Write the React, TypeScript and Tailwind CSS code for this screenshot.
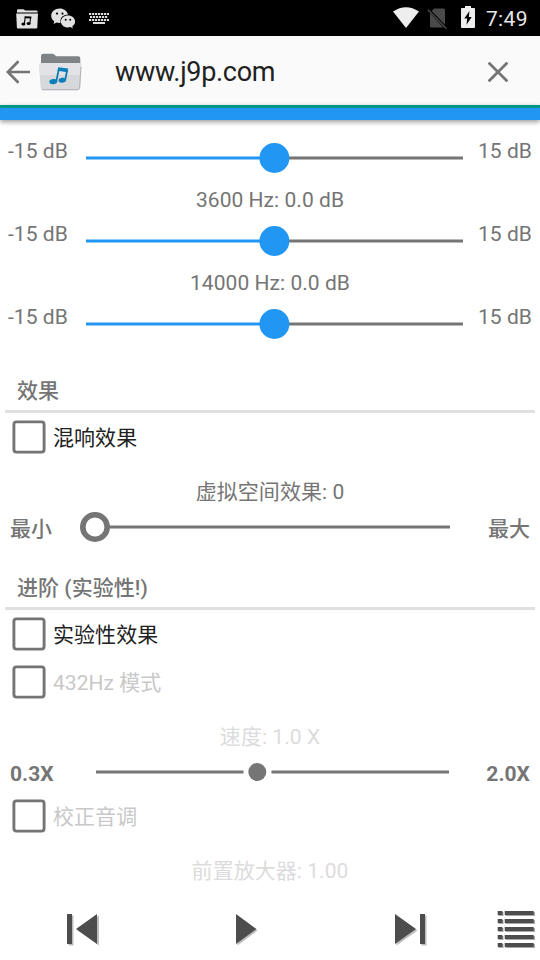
import React, { useState } from "react";

const FONT = "font-[Roboto,'Noto_Sans_CJK_SC',sans-serif]";

function StatusBar() {
  return (
    <div className="flex h-9 shrink-0 items-center justify-between bg-black pl-4 pr-3">
      <div className="flex items-center">
        {/* Music folder */}
        <svg className="mt-px" width="23" height="20" viewBox="0 0 23 20">
          <path d="M1 3.6V1.4Q1 .2 2.2.2H7.4L9.4 1.6H20.4Q21.6 1.6 21.6 2.8V3.6Z" fill="#e2e2e2" />
          <path d="M.2 4.6H22L21.3 18.2Q21.2 19.4 20 19.4H2.2Q1 19.4.9 18.2Z" fill="#e2e2e2" />
          <path d="M8.4 7.2L15.4 7.6L15.2 9.6L9.2 9.2Z" fill="#000" />
          <path d="M9.2 8L8.4 14.6M14.7 8.5L13.8 14.2" stroke="#000" strokeWidth="1.1" />
          <ellipse cx="7.4" cy="15" rx="2" ry="1.5" fill="#000" />
          <ellipse cx="12.6" cy="14.6" rx="2" ry="1.5" fill="#000" />
        </svg>
        {/* Chat bubbles */}
        <svg className="ml-3" width="25" height="21" viewBox="0 0 25 21">
          <path d="M8.8.6C4 .6.2 3.7.2 7.8c0 2.4 1.2 4.2 3.1 5.5L2.5 16l3.1-1.6c1 .3 2.1.5 3.2.5l.8-.1C8.6 9.9 12 6.8 17 6.6 16.1 3 12.7.6 8.8.6Z" fill="#e2e2e2" />
          <path d="M17 7.5c-4 0-7.1 2.7-7.1 6s3.1 6 7.1 6c.9 0 1.7-.1 2.5-.4l2.4 1.4-.6-2.3c1.7-1.1 2.8-2.8 2.8-4.7 0-3.3-3.1-6-7.1-6Z" fill="#e2e2e2" />
          <circle cx="6" cy="5.6" r="1.1" fill="#000" />
          <circle cx="11.5" cy="5.6" r="1.1" fill="#000" />
          <circle cx="14.7" cy="11.7" r="1" fill="#000" />
          <circle cx="19.2" cy="11.7" r="1" fill="#000" />
        </svg>
        {/* Keyboard */}
        <svg className="ml-[13px] mt-px" width="20" height="12" viewBox="0 0 20 12">
          <g stroke="#dcdcdc" strokeWidth="2" fill="none">
            <path d="M0 1H20" strokeDasharray="2.2 .8" />
            <path d="M1 4H19" strokeDasharray="2.2 .8" />
            <path d="M0 7H20" strokeDasharray="2.2 .8" />
            <path d="M4 10H16" />
          </g>
        </svg>
      </div>
      <div className="flex items-center">
        <svg className="-mt-0.5" width="26" height="21" viewBox="0 0 26 21">
          <path d="M0 4.6Q13-4.3 26 4.6L13 21Z" fill="#eee" />
        </svg>
        <svg className="ml-2" width="20" height="21" viewBox="0 0 20 21">
          <path d="M7 .5H16.5Q18 .5 18 2V16.8L4.7 2.9Z" fill="#4a4a4a" />
          <path d="M3 5.2L16.3 19.5H4.5Q3 19.5 3 18Z" fill="#4a4a4a" />
          <path d="M.9 1.7L19.3 20.6" stroke="#4a4a4a" strokeWidth="1.5" />
        </svg>
        <svg className="-mt-0.5 ml-3.5" width="14" height="22" viewBox="0 0 14 22">
          <path d="M4 0H10V2H13Q14 2 14 3V21Q14 22 13 22H1Q0 22 0 21V3Q0 2 1 2H4Z" fill="#eee" />
          <path d="M8.5 5L3.3 12.5H6.2L5.5 18.8L10.7 11H7.8Z" fill="#000" />
        </svg>
        <span className="ml-[11px] mt-0.5 text-[21px] leading-9 tracking-[0.4px] text-[#e6e6e6]">7:49</span>
      </div>
    </div>
  );
}

function Toolbar() {
  return (
    <header className="flex h-[69px] shrink-0 items-center bg-[#fafafa] pl-1.5">
      <button type="button" aria-label="Back" className="mt-0.5">
        <svg width="25" height="24" viewBox="0 0 25 24">
          <path d="M24 12H2M12.5 1.2L1.8 12L12.5 22.8" fill="none" stroke="#757575" strokeWidth="2.7" />
        </svg>
      </button>
      <svg className="ml-2 mt-0.5" width="43" height="38" viewBox="0 0 43 38">
        <path d="M2 12V3Q2 .8 4.2.8H14L17.5 3.2H39Q41.3 3.2 41.3 5.6V12Z" fill="#7e8386" />
        <path d="M.2 12.2Q.2 10 2.5 10H40.2Q42.6 10 42.5 12.4L41.2 34.5Q41 37.2 38.5 37.2H4.2Q1.8 37.2 1.6 34.5Z" fill="#d7d8dc" />
        <path d="M.2 12.2Q.2 10 2.5 10H40.2Q42.6 10 42.5 12.4L41.9 22H.8Z" fill="#e2e2e7" />
        <path d="M3 36.7H38.5Q40.5 36.3 40.7 34L41.9 14" fill="none" stroke="#b1b2b5" strokeWidth="1" />
        <path d="M19.2 14.2L29.2 15.6L28.4 19.3L18.7 17.8Z" fill="#0b80b8" />
        <path d="M20 15.2L17.3 28.2M28.3 16.5L26.2 27" stroke="#0b80b8" strokeWidth="1.8" />
        <ellipse cx="14.3" cy="28.6" rx="4" ry="2.6" transform="rotate(-8 14.3 28.6)" fill="#0b80b8" />
        <ellipse cx="23.3" cy="27.2" rx="3.8" ry="2.5" transform="rotate(-8 23.3 27.2)" fill="#0b80b8" />
      </svg>
      <h1 className="ml-[33px] mt-0.5 grow text-[27px] leading-9 tracking-[-0.3px] text-[#212121]">www.j9p.com</h1>
      <button type="button" aria-label="Close" className="mr-8 mt-0.5">
        <svg width="20" height="20" viewBox="0 0 20 20">
          <path d="M.6.6L19.4 19.4M19.4.6L.6 19.4" stroke="#757575" strokeWidth="2.8" />
        </svg>
      </button>
    </header>
  );
}

function EqSlider() {
  return (
    <div className="flex h-[50px] shrink-0 px-2">
      <span className="w-[78px] leading-9">-15 dB</span>
      <svg className="shrink-0" width="377" height="50" viewBox="0 0 377 50">
        <path d="M188 25H377" stroke="#757575" strokeWidth="3.2" />
        <path d="M0 25H188" stroke="#2196f3" strokeWidth="3.2" />
        <circle cx="188.4" cy="25" r="15" fill="#2196f3" />
      </svg>
      <span className="grow text-right leading-9">15 dB</span>
    </div>
  );
}

function SectionTitle({ children }: { children: React.ReactNode }) {
  return (
    <h2 className="mx-[5px] shrink-0 border-b-[3px] border-[#e0e0e0] pl-3 pt-5 font-medium leading-[37px]">
      {children}
    </h2>
  );
}

function CheckRow({ label, disabled = false }: { label: string; disabled?: boolean }) {
  const [checked, setChecked] = useState(false);

  return (
    <button
      type="button"
      disabled={disabled}
      onClick={() => setChecked(!checked)}
      className="flex h-12 shrink-0 items-center pl-3 text-left"
    >
      <svg width="34" height="34" viewBox="0 0 34 34">
        <rect x="1.9" y="1.9" width="30.2" height="30.2" rx="2.5" fill="none" stroke="#757575" strokeWidth="2.9" />
        {checked && <path d="M8 17L14.5 23.5L26 11" fill="none" stroke="#2196f3" strokeWidth="3" />}
      </svg>
      <span className={`ml-[7px] mt-[3px] ${disabled ? "text-[#c8c8c8]" : "text-[#212121]"}`}>{label}</span>
    </button>
  );
}

function PlayerBar() {
  return (
    <footer className="mt-[22px] flex shrink-0 items-center pl-[66px] pr-1">
      <button type="button" aria-label="Previous">
        <svg width="34" height="38" viewBox="0 0 34 38">
          <path d="M2.5 5.5H7.5V35.5H2.5ZM33 5.5V35.5L12 20.5Z" fill="#bdbdbd" />
          <path d="M1 4H6V34H1ZM31 4V34L10 19Z" fill="#4d4d4d" />
        </svg>
      </button>
      <button type="button" aria-label="Play" className="ml-[135px]">
        <svg width="25" height="38" viewBox="0 0 25 38">
          <path d="M2.5 5.5V35.5L22.5 20.5Z" fill="#bdbdbd" />
          <path d="M1 4V34L21.5 19Z" fill="#4d4d4d" />
        </svg>
      </button>
      <button type="button" aria-label="Next" className="ml-[134px]">
        <svg width="34" height="38" viewBox="0 0 34 38">
          <path d="M2.5 5.5V35.5L23.5 20.5ZM27.5 5.5H32.5V35.5H27.5Z" fill="#bdbdbd" />
          <path d="M1 4V34L22 19ZM26 4H31V34H26Z" fill="#4d4d4d" />
        </svg>
      </button>
      <button type="button" aria-label="Playlist" className="ml-[69px]">
        <svg width="39" height="38" viewBox="0 0 39 38">
          {[1, 9, 17, 25, 33].map((y) => (
            <g key={y}>
              <path d={`M1.5 ${y + 1}h5v4h-5ZM8.5 ${y + 1}h29.5v4h-29.5Z`} fill="#a8a8a8" />
              <path d={`M.7 ${y}h4.8v4h-4.8ZM7.7 ${y}h29v4h-29Z`} fill="#4d4d4d" />
            </g>
          ))}
        </svg>
      </button>
    </footer>
  );
}

export default function App() {
  return (
    <div className={`flex h-[960px] w-[540px] flex-col overflow-hidden bg-white text-[21px] tracking-[0.05px] text-[#757575] ${FONT}`}>
      <StatusBar />
      <Toolbar />
      <div className="z-10 h-[15px] shrink-0 border-t-[3px] border-[#009688] bg-[#2196f3] shadow-[0_2px_5px_rgba(0,0,0,0.4)]" />

      <main className="flex flex-col pt-[13px]">
        <EqSlider />
        <p className="pt-0.5 text-center leading-[31px]">3600 Hz: 0.0 dB</p>
        <EqSlider />
        <p className="pt-0.5 text-center leading-[31px]">14000 Hz: 0.0 dB</p>
        <EqSlider />

        <div className="mt-1 flex flex-col">
          <SectionTitle>效果</SectionTitle>
        </div>
        <CheckRow label="混响效果" />
        <p className="mt-3.5 text-center leading-[34px]">虚拟空间效果: 0</p>
        <div className="-mt-2 flex h-[50px] items-center px-2.5">
          <span className="mt-[7px] w-[70px] font-medium">最小</span>
          <svg width="370" height="50" viewBox="0 0 370 50">
            <path d="M29 26H370" stroke="#757575" strokeWidth="3.2" />
            <circle cx="15" cy="26" r="12.2" fill="#fff" stroke="#757575" strokeWidth="5.6" />
          </svg>
          <span className="mt-[7px] grow text-right font-medium">最大</span>
        </div>

        <div className="-mt-px flex flex-col">
          <SectionTitle>进阶 (实验性!)</SectionTitle>
        </div>
        <CheckRow label="实验性效果" />
        <CheckRow label="432Hz 模式" disabled />
        <p className="mt-3.5 text-center leading-[34px] text-[#dcdcdc]">速度: 1.0 X</p>
        <div className="flex h-[38px] items-center px-2.5">
          <span className="mt-1 w-[86px] font-bold">0.3X</span>
          <svg width="353" height="38" viewBox="0 0 353 38">
            <path d="M0 18H147.5M175.5 18H353" stroke="#757575" strokeWidth="3.2" />
            <circle cx="161.3" cy="18" r="9" fill="#757575" />
          </svg>
          <span className="mt-1 grow text-right font-bold">2.0X</span>
        </div>
        <CheckRow label="校正音调" disabled />
        <p className="mt-3.5 text-center leading-[34px] text-[#dcdcdc]">前置放大器: 1.00</p>
      </main>

      <PlayerBar />
    </div>
  );
}
